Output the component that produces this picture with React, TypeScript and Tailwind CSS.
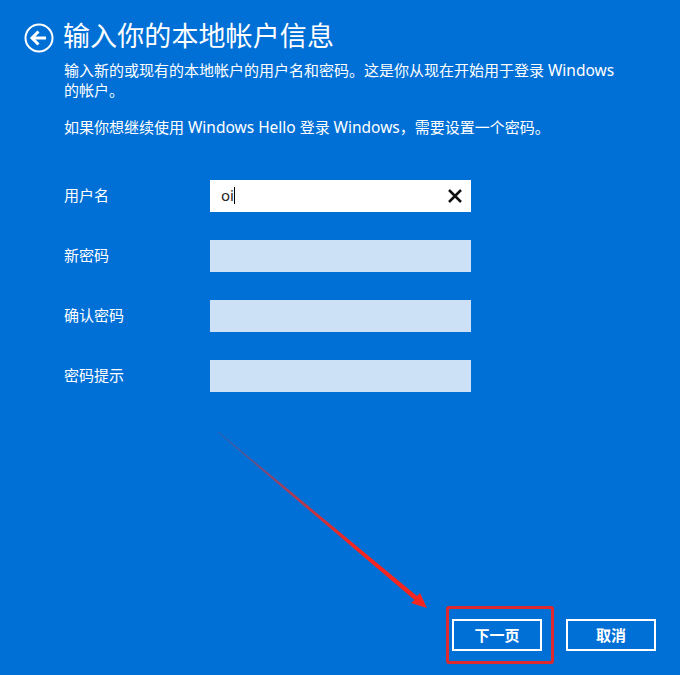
const font = "font-['Noto_Sans','Noto_Sans_CJK_SC',sans-serif]";

const Field = ({ label, children, active }: { label: string; children?: React.ReactNode; active?: boolean }) => (
  <div className="flex items-center h-8">
    <label className="w-[146px] pb-[2px] text-[15px] leading-5 text-white">{label}</label>
    <div className={`w-[261px] h-8 flex items-center ${active ? "bg-white" : "bg-[#cce0f6]"}`}>{children}</div>
  </div>
);

const BackIcon = () => (
  <svg width="30" height="30" viewBox="0 0 30 30" fill="none" className="shrink-0 mt-1">
    <circle cx="15" cy="15" r="13.5" stroke="white" strokeWidth="2" />
    <path d="M8 15H22" stroke="white" strokeWidth="3" />
    <path d="M14.5 8.5L8 15L14.5 21.5" stroke="white" strokeWidth="3" />
  </svg>
);

const Latin = ({ children }: { children: string }) => <span className="text-[15.5px]">{children}</span>;

export default function App() {
  return (
    <div className={`relative w-[680px] h-[675px] overflow-hidden bg-[#0170d6] text-white ${font}`}>
      <div className="flex items-center gap-[10px] pl-[24px] pt-[17px]">
        <BackIcon />
        <h1 className="ml-[-1px] text-[27px] leading-[38px] font-normal tracking-[0.1px]">输入你的本地帐户信息</h1>
      </div>

      <div className="pl-[64px] pr-[60px] pt-[6px] text-[15px] leading-[19.5px]">
        <p>输入新的或现有的本地帐户的用户名和密码。这是你从现在开始用于登录 <Latin>Windows</Latin> 的帐户。</p>
        <p className="mt-[18px]">如果你想继续使用 <Latin>Windows Hello</Latin> 登录 <Latin>Windows</Latin>，需要设置一个密码。</p>
      </div>

      <div className="flex flex-col gap-7 pl-[64px] pt-[42px]">
        <Field label="用户名" active>
          <span className="pl-[11px] text-[15px] text-[#222]">oi</span>
          <span className="w-px h-[17px] bg-black" />
          <svg width="16" height="16" viewBox="0 0 16 16" fill="none" className="ml-auto mr-[8px]">
            <path d="M2 2L14 14M14 2L2 14" stroke="#111" strokeWidth="2.5" />
          </svg>
        </Field>
        <Field label="新密码" />
        <Field label="确认密码" />
        <Field label="密码提示" />
      </div>

      <div className="absolute right-[24px] bottom-[24px] flex gap-6">
        <button className="w-[90px] h-8 border-2 border-white text-[15px] font-bold">下一页</button>
        <button className="w-[90px] h-8 border-2 border-white text-[15px] font-bold">取消</button>
      </div>

      {/* annotation drawn on top of the screenshot */}
      <div className="absolute left-[446px] top-[606px] w-[108px] h-[58px] rounded-[3px] border-[3px] border-[#dc2a2e]" />
      <svg width="680" height="675" className="absolute left-0 top-0 pointer-events-none">
        <defs>
          <linearGradient id="arrowFade" gradientUnits="userSpaceOnUse" x1="218" y1="432" x2="427" y2="608">
            <stop offset="0" stopColor="#f5261f" stopOpacity="0.15" />
            <stop offset="0.3" stopColor="#f5261f" stopOpacity="0.65" />
            <stop offset="0.65" stopColor="#f5261f" />
          </linearGradient>
        </defs>
        <polygon points="218.4,431.6 417,596 420,593 427,608 411,603 414.5,600 217.6,432.4" fill="url(#arrowFade)" />
      </svg>
    </div>
  );
}
